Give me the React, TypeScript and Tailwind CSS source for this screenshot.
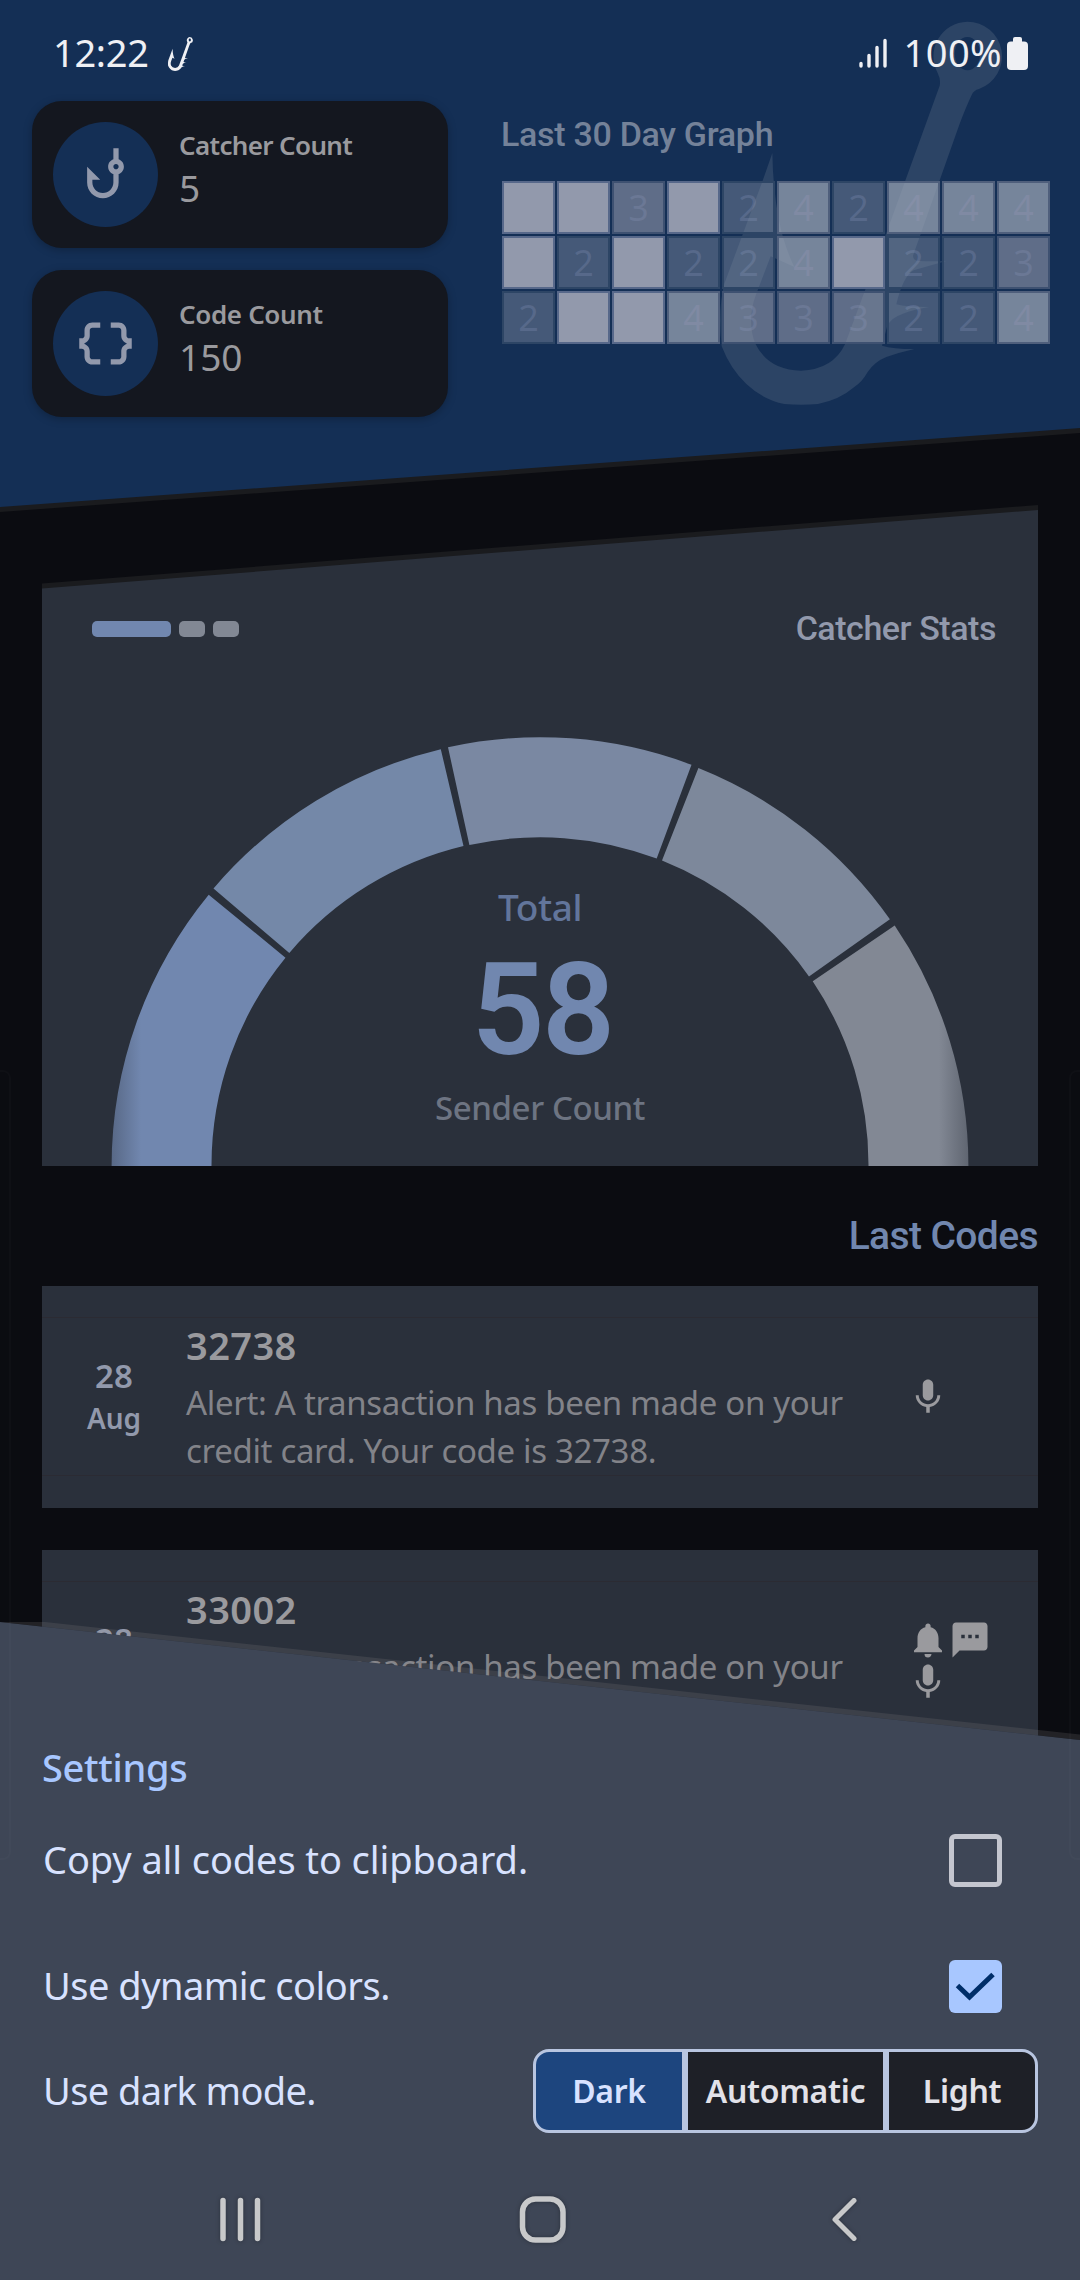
import type { ReactNode } from "react";
import { MdDataObject, MdNotifications, MdPhishing, MdSms } from "react-icons/md";

const NOTO = "font-['Noto_Sans','Open_Sans',sans-serif]";
const ROBOTO = "font-['Roboto',sans-serif]";

const HOOK_PATH =
  "M803 36A104 104 0 0 1 838 238Q822 242 816 256Q800 290 780 342L640 738Q640 754 661 754Q700 756 740 754Q690 768 642 782Q610 800 590 884Q620 892 688 892Q640 900 610 912Q575 924 563 948L547 1008Q580 1018 644 1018Q600 1028 560 1042Q525 1056 504 1087Q488 1116 464 1132Q420 1170 355 1183Q304 1187 254 1183Q190 1170 140 1123Q92 1078 66 1010Q54 900 74 822L190 510L218 430Q220 540 237 625Q250 700 284 772L213 740L170 852Q140 930 166 1000Q205 1082 304 1083Q400 1080 436 1004L560 670L720 228Q724 210 714 190A104 104 0 0 1 803 36ZM803 82A38 50 0 1 0 804 182A38 50 0 0 0 803 82Z";

function Hook({ className }: { className: string }) {
  return (
    <svg viewBox="62 34 850 1152" className={className} fill="currentColor" fillRule="evenodd">
      <path d={HOOK_PATH} />
    </svg>
  );
}

function Mic() {
  return (
    <svg viewBox="0 0 24 24" width="42" height="42" fill="currentColor">
      <path d="M12 14c1.66 0 2.99-1.34 2.99-3L15 5c0-1.66-1.34-3-3-3S9 3.34 9 5v6c0 1.66 1.34 3 3 3zm5.3-3c0 3-2.54 5.1-5.3 5.1S6.7 14 6.7 11H5c0 3.41 2.72 6.23 6 6.72V21h2v-3.28c3.28-.48 6-3.3 6-6.72h-1.7z" />
    </svg>
  );
}

function StatusBar() {
  return (
    <div className={`relative flex h-[101px] justify-between pt-[33px] pr-[52px] pl-[53px] text-[#eff0f4] ${NOTO}`}>
      <div className="flex">
        <span className="text-[38px] leading-[38px] tracking-[-0.3px]">12:22</span>
        <Hook className="mt-[4px] ml-[19px] h-[34px] w-[25px]" />
      </div>
      <div className="flex">
        <svg width="29" height="32" viewBox="0 0 29 32" className="mt-[4px] mr-[16px]" stroke="currentColor" strokeWidth="3.4" strokeLinecap="round">
          <path d="M2 26.500V29M10 18.500V29M18 10.500V29M26 3.500V29" />
        </svg>
        <span className="text-[38px] leading-[38px] tracking-[0.4px]">100%</span>
        <svg width="21" height="33" viewBox="0 0 21 33" className="mt-[4px] ml-[5px]" fill="currentColor">
          <rect x="6" y="0" width="9" height="9" rx="2" />
          <rect x="0" y="4.500" width="21" height="28.500" rx="4" />
        </svg>
      </div>
    </div>
  );
}

function CountCard({ icon, title, value, tracking }: { icon: ReactNode; title: string; value: string; tracking: string }) {
  return (
    <div className="flex h-[147px] w-[416px] rounded-[30px] bg-[#14171f] pt-[21px] pl-[21px] shadow-[0_2px_8px_rgba(0,0,0,0.25)]">
      <div className="flex h-[105px] w-[105px] items-center justify-center rounded-full bg-[#142f55] text-[63px] text-[#9299ac]">
        {icon}
      </div>
      <div className={`pt-[7px] pl-[21px] text-[#9a9a9e] ${NOTO}`}>
        <div className={`text-[26px] leading-[32px] font-semibold ${tracking}`}>{title}</div>
        <div className="mt-[6px] text-[37px] leading-[42px]">{value}</div>
      </div>
    </div>
  );
}

const DAYS = [5, 5, 3, 5, 2, 4, 2, 4, 4, 4, 5, 2, 5, 2, 2, 4, 5, 2, 2, 3, 2, 5, 5, 4, 3, 3, 3, 2, 2, 4];
const DAY_STYLES: Record<number, string> = {
  2: "bg-[rgba(129,142,165,0.45)] border-[#2d4565] text-[rgba(154,165,206,0.22)]",
  3: "bg-[rgba(145,152,170,0.6)] border-[#3e5171] text-[rgba(150,160,198,0.22)]",
  4: "bg-[rgba(159,170,185,0.7)] border-[#4f5f7c] text-[rgba(165,158,195,0.22)]",
  5: "bg-[#9299ac] border-[#57688a] text-[#9299ac]",
};

function Header() {
  return (
    <header className="relative h-[505px]">
      <div className="absolute inset-x-0 top-0 h-[512px] bg-[#1a1b1e] [clip-path:polygon(0_0,100%_0,100%_433px,0_512px)]" />
      <div className="absolute inset-x-0 top-0 h-[512px] bg-[#142f55] [clip-path:polygon(0_0,100%_0,100%_428px,0_507px)]" />
      <Hook className="absolute top-[21px] left-[720px] h-[384px] w-[284px] text-[#2c4465]" />
      <StatusBar />
      <div className="relative flex">
        <div className="ml-[32px] flex flex-col gap-[22px]">
          <CountCard icon={<MdPhishing />} title="Catcher Count" value="5" tracking="tracking-[-0.65px]" />
          <CountCard icon={<MdDataObject />} title="Code Count" value="150" tracking="tracking-[-0.35px]" />
        </div>
        <div className="mt-[13px] ml-[53px]">
          <div className={`text-[34px] leading-[40px] font-medium tracking-[-0.3px] text-[#748299] ${ROBOTO}`}>Last 30 Day Graph</div>
          <div className="mt-[27px] ml-px grid grid-cols-[repeat(10,53px)] gap-[2px]">
            {DAYS.map((d, i) => (
              <div
                key={i}
                className={`flex h-[53px] items-center justify-center border-2 bg-clip-padding text-[36px] leading-[40px] ${NOTO} ${DAY_STYLES[d]}`}
              >
                {d === 5 ? "" : d}
              </div>
            ))}
          </div>
        </div>
      </div>
    </header>
  );
}

function Gauge() {
  return (
    <svg viewBox="42 505 996 661" className="absolute inset-0 h-full w-full">
      <defs>
        <linearGradient id="edgeLeft" gradientUnits="userSpaceOnUse" x1="111" y1="0" x2="141" y2="0">
          <stop offset="0" stopColor="#2a303b" stopOpacity="0.36" />
          <stop offset="1" stopColor="#2a303b" stopOpacity="0" />
        </linearGradient>
        <linearGradient id="edgeRight" gradientUnits="userSpaceOnUse" x1="969" y1="0" x2="939" y2="0">
          <stop offset="0" stopColor="#2a303b" stopOpacity="0.4" />
          <stop offset="1" stopColor="#2a303b" stopOpacity="0" />
        </linearGradient>
      </defs>
      <path fill="#7187af" d="M111.600 1166A428.400 428.400 0 0 1 208.700 894.700L285.500 957.700A328.500 328.500 0 0 0 211.500 1166Z" />
      <path fill="#7488a8" d="M213.500 888.500A428.400 428.400 0 0 1 440.800 749.200L463.500 846A328.500 328.500 0 0 0 289.300 953Z" />
      <path fill="#7a88a2" d="M448 747.300A428.400 428.400 0 0 1 691.500 764.800L656.700 858.600A328.500 328.500 0 0 0 469.400 845Z" />
      <path fill="#7d889b" d="M698.400 768A428.400 428.400 0 0 1 889.900 919.300L809 976.400A328.500 328.500 0 0 0 662 860.400Z" />
      <path fill="#828894" d="M894.700 925.500A428.400 428.400 0 0 1 968.400 1166H868.500A328.500 328.500 0 0 0 812.700 981.300Z" />
      <rect x="111" y="1000" width="30" height="166" fill="url(#edgeLeft)" />
      <rect x="939" y="1000" width="30" height="166" fill="url(#edgeRight)" />
    </svg>
  );
}

function CatcherStats() {
  return (
    <section className="relative h-[661px]">
      <div className="absolute inset-0 bg-[#1a1b1e] [clip-path:polygon(0_78.5px,100%_0,100%_100%,0_100%)]" />
      <div className="absolute inset-0 bg-[#2a303b] [clip-path:polygon(0_83.5px,100%_5px,100%_100%,0_100%)]" />
      <Gauge />
      <div className="relative flex flex-col pt-[104px]">
        <div className="flex items-center justify-between pr-[42px] pl-[50px]">
          <div className="flex gap-[8px]">
            <span className="h-[16px] w-[79px] rounded-[5px] bg-[#7187af]" />
            <span className="h-[16px] w-[26px] rounded-[5px] bg-[#828894]" />
            <span className="h-[16px] w-[26px] rounded-[5px] bg-[#828894]" />
          </div>
          <span className={`pb-[2px] text-[34px] leading-[38px] font-medium tracking-[-0.45px] text-[#9299ac] ${ROBOTO}`}>Catcher Stats</span>
        </div>
        <div className={`mt-[236px] text-center text-[37px] leading-[44px] font-medium tracking-[-0.4px] text-[#62759b] ${NOTO}`}>Total</div>
        <div className={`mt-[17px] pl-[4px] text-center text-[128px] leading-[128px] font-semibold tracking-[-2.5px] text-[#7187af] ${ROBOTO}`}>58</div>
        <div className={`mt-[14px] text-center text-[33px] leading-[40px] font-medium tracking-[-0.4px] text-[#6d7482] ${NOTO}`}>Sender Count</div>
      </div>
    </section>
  );
}

function CodeCard({ code, icons }: { code: string; icons: ReactNode }) {
  return (
    <article className={`relative flex h-[222px] items-center bg-[#2a303b] ${NOTO}`}>
      <div className="absolute inset-x-0 top-[31px] h-[159px] border-y border-[#2b2b33]" />
      <div className="relative w-[144px] text-center leading-[42px] font-semibold text-[#9299ac]">
        <div className="text-[33px]">28</div>
        <div className="text-[28px]">Aug</div>
      </div>
      <div className="relative w-[721px]">
        <div className="text-[38px] leading-[52px] font-semibold tracking-[0.4px] text-[#9a9a9e]">{code}</div>
        <div className="mt-[8px] text-[33px] leading-[48px] tracking-[-0.33px] whitespace-nowrap text-[#828389]">
          Alert: A transaction has been made on your
          <br />
          credit card. Your code is {code}.
        </div>
      </div>
      <div className="relative flex w-[84px] flex-wrap text-[42px] text-[#9a9a9e]">{icons}</div>
    </article>
  );
}

function Segment({ label, className }: { label: string; className: string }) {
  return <div className={`flex h-[84px] items-center justify-center border-[3px] border-[#b8c5e0] ${className}`}>{label}</div>;
}

function SettingsSheet() {
  return (
    <div className={`absolute inset-x-0 bottom-0 h-[658px] text-[#d8e2ff] ${NOTO}`}>
      <div className="absolute inset-0 bg-[rgba(155,152,150,0.16)] [clip-path:polygon(0_0,45px_0,100%_112.5px,100%_118px,0_0)]" />
      <div className="absolute inset-0 bg-[#3e4656] [clip-path:polygon(0_0,100%_118px,100%_100%,0_100%)]" />
      <div className="relative pt-[123px] pl-[42px] leading-[44px]">
        <div className="text-[38px] font-medium tracking-[-0.3px] text-[#a8c7ff]">Settings</div>
        <div className="mt-[8px] flex h-[126px] items-center justify-between pr-[78px]">
          <span className="pb-[3px] pl-px text-[38px] tracking-[-0.1px]">Copy all codes to clipboard.</span>
          <span className="h-[53px] w-[53px] rounded-[6px] border-[5px] border-[#c4c6cf]" />
        </div>
        <div className="flex h-[126px] items-center justify-between pr-[78px]">
          <span className="pb-[3px] pl-px text-[38px] tracking-[-0.5px]">Use dynamic colors.</span>
          <span className="h-[53px] w-[53px] rounded-[6px] bg-[#a8c7ff]">
            <svg width="53" height="53" viewBox="0 0 53 53" fill="none" stroke="#002e69" strokeWidth="5">
              <path d="M8.500 25.500L20.500 37L44 14.500" />
            </svg>
          </span>
        </div>
        <div className="flex h-[84px] items-center justify-between pr-[42px]">
          <span className="pb-[3px] pl-px text-[38px] tracking-[-0.6px]">Use dark mode.</span>
          <div className="flex text-[32px] font-semibold tracking-[-0.3px] text-[#e2e2e9]">
            <Segment label="Dark" className="w-[152px] rounded-l-[16px] bg-[#1d457e] text-[#d8e2ff]" />
            <Segment label="Automatic" className="w-[201px] bg-[#1e2027]" />
            <Segment label="Light" className="w-[152px] rounded-r-[16px] bg-[#1e2027]" />
          </div>
        </div>
      </div>
      <nav className="relative mt-[56px] flex pl-[210px] text-[#c8c9ca]">
        <svg width="60" height="60" viewBox="0 0 60 60" stroke="currentColor" strokeWidth="5.500" strokeLinecap="round" className="drop-shadow-[0_0_2px_rgba(0,0,0,0.3)]">
          <path d="M13 11.500V49.500M30.500 11.500V49.500M47.500 11.500V49.500" />
        </svg>
        <svg width="60" height="60" viewBox="0 0 60 60" fill="none" stroke="currentColor" strokeWidth="5.500" className="ml-[243px] drop-shadow-[0_0_2px_rgba(0,0,0,0.3)]">
          <rect x="9.500" y="10" width="40.500" height="41" rx="13" />
        </svg>
        <svg width="60" height="60" viewBox="0 0 60 60" fill="none" stroke="currentColor" strokeWidth="5" strokeLinecap="round" strokeLinejoin="round" className="ml-[242px] drop-shadow-[0_0_2px_rgba(0,0,0,0.3)]">
          <path d="M39 11.500L20 30.500L39 49.500" />
        </svg>
      </nav>
    </div>
  );
}

export default function App() {
  return (
    <div className="relative h-[2280px] w-[1080px] overflow-hidden bg-[#0b0c11]">
      <Header />
      <main className="px-[42px]">
        <CatcherStats />
        <h2 className={`mt-[48px] text-right text-[39px] leading-[44px] font-medium tracking-[-0.6px] text-[#7187af] ${ROBOTO}`}>Last Codes</h2>
        <div className="mt-[28px] flex flex-col gap-[42px]">
          <CodeCard code="32738" icons={<Mic />} />
          <CodeCard
            code="33002"
            icons={
              <>
                <MdNotifications />
                <MdSms />
                <Mic />
              </>
            }
          />
        </div>
      </main>
      <SettingsSheet />
      <div className="absolute top-[1070px] left-[-10px] h-[790px] w-[21px] rounded-[8px] border-2 border-white/[0.02]" />
      <div className="absolute top-[1070px] right-[-10px] h-[790px] w-[21px] rounded-[8px] border-2 border-white/[0.02]" />
    </div>
  );
}
